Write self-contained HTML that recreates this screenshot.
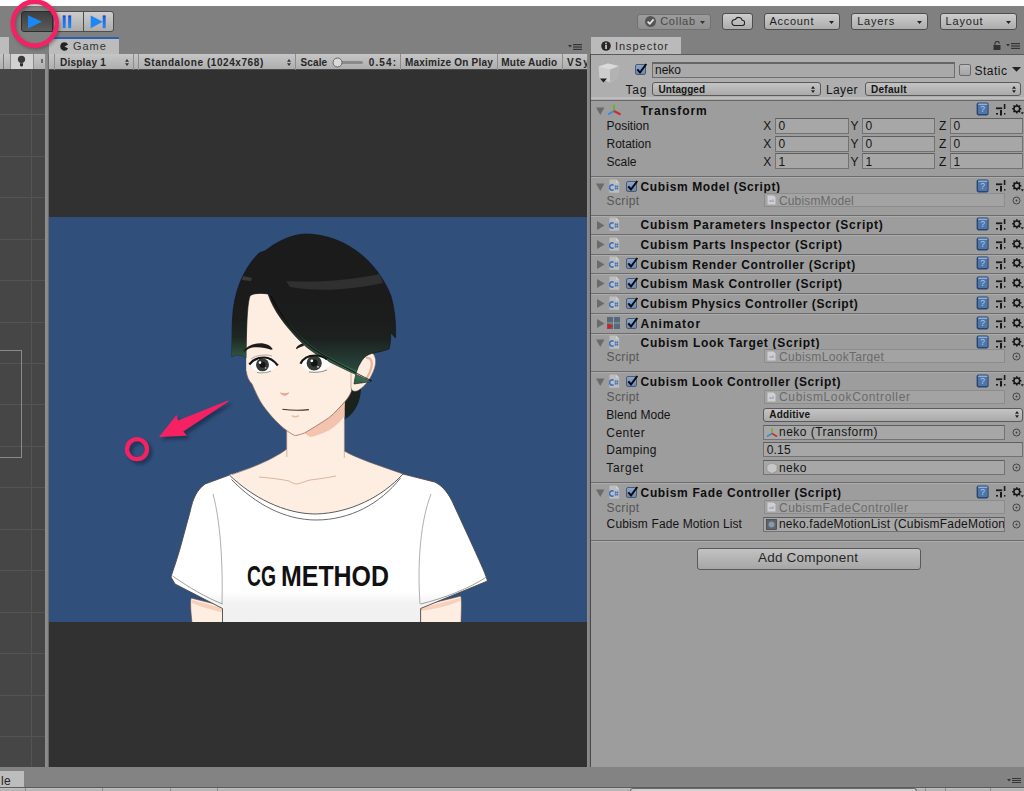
<!DOCTYPE html><html><head><meta charset="utf-8"><style>
*{margin:0;padding:0;box-sizing:border-box}
html,body{width:1024px;height:791px;overflow:hidden;background:#fff;font-family:"Liberation Sans",sans-serif}
.t{position:absolute;line-height:1;white-space:nowrap}
.abs{position:absolute}
</style></head><body><div style="position:absolute;left:0px;top:0px;width:1024px;height:6px;background:#fff"></div>
<div style="position:absolute;left:0px;top:6px;width:1024px;height:761px;background:#808080"></div>
<div style="position:absolute;left:0px;top:70px;width:45px;height:697px;background:#464646"></div>
<div style="position:absolute;left:0px;top:114px;width:45px;height:1px;background:#545454"></div>
<div style="position:absolute;left:0px;top:156px;width:45px;height:1px;background:#545454"></div>
<div style="position:absolute;left:0px;top:197px;width:45px;height:1px;background:#545454"></div>
<div style="position:absolute;left:0px;top:239px;width:45px;height:1px;background:#545454"></div>
<div style="position:absolute;left:0px;top:280px;width:45px;height:1px;background:#545454"></div>
<div style="position:absolute;left:0px;top:322px;width:45px;height:1px;background:#545454"></div>
<div style="position:absolute;left:0px;top:363px;width:45px;height:1px;background:#545454"></div>
<div style="position:absolute;left:0px;top:404px;width:45px;height:1px;background:#545454"></div>
<div style="position:absolute;left:0px;top:446px;width:45px;height:1px;background:#545454"></div>
<div style="position:absolute;left:0px;top:487px;width:45px;height:1px;background:#545454"></div>
<div style="position:absolute;left:0px;top:529px;width:45px;height:1px;background:#545454"></div>
<div style="position:absolute;left:0px;top:570px;width:45px;height:1px;background:#545454"></div>
<div style="position:absolute;left:0px;top:612px;width:45px;height:1px;background:#545454"></div>
<div style="position:absolute;left:0px;top:653px;width:45px;height:1px;background:#545454"></div>
<div style="position:absolute;left:0px;top:695px;width:45px;height:1px;background:#545454"></div>
<div style="position:absolute;left:0px;top:736px;width:45px;height:1px;background:#545454"></div>
<div style="position:absolute;left:31px;top:70px;width:1px;height:697px;background:#545454"></div>
<div style="position:absolute;left:-5px;top:350px;width:27px;height:108px;border:1px solid #8a8a8a"></div>
<div style="position:absolute;left:0px;top:37px;width:9px;height:17px;background:#bcbcbc"></div>
<div style="position:absolute;left:0px;top:53.5px;width:45px;height:16.5px;background:linear-gradient(#c6c6c6,#b0b0b0);border-bottom:1px solid #4a4a4a"></div>
<div style="position:absolute;left:10px;top:54px;width:24px;height:15px;background:#d2d2d2;border-left:1px solid #8a8a8a;border-right:1px solid #8a8a8a"></div>
<svg class="abs" style="left:16px;top:55px" width="12" height="13"><circle cx="5.5" cy="4.3" r="3.6" fill="#3a3a3a"/><path d="M4 8.3h3v1.6a1.5 1.5 0 0 1-3 0z" fill="#2a2a2a"/></svg>
<div style="position:absolute;left:3px;top:54px;width:1px;height:15px;background:#7c7c7c"></div>
<div style="position:absolute;left:41px;top:58.8px;width:1.6px;height:4.5px;background:#6a6a6a"></div>
<div style="position:absolute;left:45px;top:54px;width:4px;height:713px;background:linear-gradient(90deg,#8e8e8e,#8a8a8a 60%,#5e5e5e)"></div>
<div style="position:absolute;left:49px;top:37px;width:70px;height:2px;background:#2a62b0"></div>
<div style="position:absolute;left:49px;top:39px;width:70px;height:15px;background:#bcbcbc"></div>
<div class="t" style="left:73px;top:41.46px;font-size:11px;font-weight:normal;color:#333333;letter-spacing:0.97px;">Game</div>
<svg class="abs" style="left:59.5px;top:41.5px" width="9" height="9"><path d="M4.5 0.3a4.2 4.2 0 1 0 3.6 6.3L4.5 4.5l3.6-2.1A4.2 4.2 0 0 0 4.5 0.3z" fill="#222"/></svg>
<div style="position:absolute;left:49px;top:54px;width:539px;height:16px;background:linear-gradient(#c6c6c6,#aeaeae);border-bottom:1px solid #4a4a4a"></div>
<div style="position:absolute;left:54px;top:54px;width:1px;height:16px;background:#8c8c8c"></div>
<div style="position:absolute;left:133px;top:54px;width:1px;height:16px;background:#8c8c8c"></div>
<div style="position:absolute;left:138px;top:54px;width:1px;height:16px;background:#8c8c8c"></div>
<div style="position:absolute;left:295px;top:54px;width:1px;height:16px;background:#8c8c8c"></div>
<div style="position:absolute;left:400px;top:54px;width:1px;height:16px;background:#8c8c8c"></div>
<div style="position:absolute;left:497px;top:54px;width:1px;height:16px;background:#8c8c8c"></div>
<div style="position:absolute;left:562px;top:54px;width:1px;height:16px;background:#8c8c8c"></div>
<div class="t" style="left:60px;top:57.62px;font-size:10px;font-weight:bold;color:#262626;letter-spacing:0.235px;">Display 1</div>
<div class="t" style="left:144px;top:57.62px;font-size:10px;font-weight:bold;color:#262626;letter-spacing:0.569px;">Standalone (1024x768)</div>
<svg class="abs" style="left:125px;top:59px" width="4" height="7"><path d="M0 2.8L2 0L4 2.8zM0 4.2L2 7L4 4.2z" fill="#333"/></svg>
<svg class="abs" style="left:287px;top:59px" width="4" height="7"><path d="M0 2.8L2 0L4 2.8zM0 4.2L2 7L4 4.2z" fill="#333"/></svg>
<div class="t" style="left:300.6px;top:57.62px;font-size:10px;font-weight:bold;color:#262626;letter-spacing:0.09px;">Scale</div>
<div style="position:absolute;left:335px;top:61px;width:28px;height:3px;background:#8a8a8a;border-radius:2px"></div>
<svg class="abs" style="left:332px;top:57px" width="11" height="11"><circle cx="5.5" cy="5.5" r="4.5" fill="#d8d8d8" stroke="#666"/></svg>
<div class="t" style="left:368.7px;top:57.62px;font-size:10px;font-weight:bold;color:#262626;letter-spacing:1.126px;">0.54:</div>
<div class="t" style="left:405px;top:57.62px;font-size:10px;font-weight:bold;color:#262626;letter-spacing:0.221px;">Maximize On Play</div>
<div class="t" style="left:501.3px;top:57.62px;font-size:10px;font-weight:bold;color:#262626;letter-spacing:0.204px;">Mute Audio</div>
<div class="t" style="left:567px;top:57.62px;font-size:10px;font-weight:bold;color:#262626;letter-spacing:1.447px;">VSy</div>
<svg class="abs" style="left:568px;top:44px" width="14" height="7"><path d="M0 1h4L2 3.5z" fill="#333"/><rect x="5" y="0" width="9" height="1.2" fill="#333"/><rect x="5" y="2.4" width="9" height="1.2" fill="#333"/><rect x="5" y="4.8" width="9" height="1.2" fill="#333"/></svg>
<div style="position:absolute;left:49px;top:70px;width:538px;height:697px;background:#313131"></div>
<div style="position:absolute;left:49px;top:217px;width:538px;height:405px;background:#304f7b"></div>
<div style="position:absolute;left:587px;top:54px;width:4px;height:713px;background:linear-gradient(90deg,#8e8e8e,#7a7a7a)"></div>
<div style="position:absolute;left:590px;top:54px;width:1px;height:713px;background:#4a4a4a"></div>
<div style="position:absolute;left:53px;top:11px;width:61px;height:21px;background:linear-gradient(#cdcdcd,#acacac);border:1px solid #4e4e4e;border-radius:3px;"></div>
<div style="position:absolute;left:83px;top:12px;width:1px;height:19px;background:#4e4e4e"></div>
<div style="position:absolute;left:21px;top:11px;width:32px;height:21px;background:linear-gradient(#3e3e3e,#5c5c5c);border:1px solid #2c2c2c;border-radius:3px 0 0 3px"></div>
<svg class="abs" style="left:27px;top:15px" width="16" height="14"><path d="M1 0.3L15 6.8L1 13.5z" fill="#1b86f5"/></svg>
<svg class="abs" style="left:62px;top:15px" width="10" height="14"><defs><linearGradient id="bg1" x1="0" y1="0" x2="0" y2="1"><stop offset="0" stop-color="#0a2a90"/><stop offset="0.12" stop-color="#1a5fe0"/><stop offset="1" stop-color="#2a86f8"/></linearGradient></defs><rect x="0.7" y="0.5" width="3" height="12.7" fill="url(#bg1)"/><rect x="6.2" y="0.5" width="3" height="12.7" fill="url(#bg1)"/></svg>
<svg class="abs" style="left:90px;top:15px" width="17" height="14"><path d="M0.7 0.5L12.7 6.8L0.7 13.2z" fill="#1b86f5"/><rect x="12.7" y="0.5" width="3" height="12.7" fill="url(#bg1)"/></svg>
<div style="position:absolute;left:637px;top:13.5px;width:74px;height:16px;background:linear-gradient(#9c9c9c,#909090);border:1px solid #727272;border-radius:3px"></div>
<svg class="abs" style="left:645px;top:16px" width="12" height="12"><circle cx="5.5" cy="5.5" r="5.5" fill="#555"/><path d="M2.6 5.6L4.8 7.8L8.6 3.4" stroke="#e6e6e6" stroke-width="1.7" fill="none"/></svg>
<div class="t" style="left:660.2px;top:15.66px;font-size:11px;font-weight:normal;color:#484848;letter-spacing:0.738px;">Collab</div>
<svg class="abs" style="left:699.5px;top:21px" width="5" height="3"><path d="M0 0h5L2.5 3z" fill="#333"/></svg>
<div style="position:absolute;left:722px;top:13px;width:31px;height:17px;background:linear-gradient(#cdcdcd,#acacac);border:1px solid #4e4e4e;border-radius:3px;"></div>
<svg class="abs" style="left:731px;top:16px" width="14" height="11"><path d="M3.5 9.5h7.5a2.6 2.6 0 0 0 0.2-5.2A3.6 3.6 0 0 0 4.4 3.5 2.9 2.9 0 0 0 3.5 9.5z" stroke="#222" stroke-width="1.1" fill="none"/></svg>
<div style="position:absolute;left:764px;top:13px;width:76px;height:17px;background:linear-gradient(#cdcdcd,#acacac);border:1px solid #4e4e4e;border-radius:3px;"></div>
<div class="t" style="left:769.6px;top:15.86px;font-size:11px;font-weight:normal;color:#1e1e1e;letter-spacing:0.688px;">Account</div>
<svg class="abs" style="left:829px;top:20.5px" width="5" height="3"><path d="M0 0h5L2.5 3z" fill="#222"/></svg>
<div style="position:absolute;left:851px;top:13px;width:77px;height:17px;background:linear-gradient(#cdcdcd,#acacac);border:1px solid #4e4e4e;border-radius:3px;"></div>
<div class="t" style="left:857.2px;top:15.86px;font-size:11px;font-weight:normal;color:#1e1e1e;letter-spacing:0.79px;">Layers</div>
<svg class="abs" style="left:917px;top:20.5px" width="5" height="3"><path d="M0 0h5L2.5 3z" fill="#222"/></svg>
<div style="position:absolute;left:940px;top:13px;width:77px;height:17px;background:linear-gradient(#cdcdcd,#acacac);border:1px solid #4e4e4e;border-radius:3px;"></div>
<div class="t" style="left:945.5px;top:15.86px;font-size:11px;font-weight:normal;color:#1e1e1e;letter-spacing:0.83px;">Layout</div>
<svg class="abs" style="left:1006px;top:20.5px" width="5" height="3"><path d="M0 0h5L2.5 3z" fill="#222"/></svg>
<div style="position:absolute;left:0px;top:767px;width:1024px;height:21px;background:#838383"></div>
<div style="position:absolute;left:0px;top:771px;width:24px;height:17px;background:#bdbdbd"></div>
<div class="t" style="left:1px;top:774.60px;font-size:12px;font-weight:normal;color:#222;letter-spacing:0.4px;">le</div>
<div style="position:absolute;left:0px;top:787px;width:1024px;height:4px;background:linear-gradient(#c0c0c0,#b0b0b0);border-top:1px solid #5c5c5c"></div>
<div style="position:absolute;left:25px;top:788px;width:1px;height:3px;background:#8a8a8a"></div>
<div style="position:absolute;left:102px;top:788px;width:1px;height:3px;background:#8a8a8a"></div>
<div style="position:absolute;left:170px;top:788px;width:1px;height:3px;background:#8a8a8a"></div>
<div style="position:absolute;left:217px;top:788px;width:1px;height:3px;background:#8a8a8a"></div>
<div style="position:absolute;left:925px;top:788px;width:1px;height:3px;background:#8a8a8a"></div>
<div style="position:absolute;left:945px;top:788px;width:1px;height:3px;background:#8a8a8a"></div>
<div style="position:absolute;left:990px;top:788px;width:1px;height:3px;background:#8a8a8a"></div>
<div style="position:absolute;left:630px;top:788px;width:287px;height:3px;background:#d0d0d0;border:1px solid #6a6a6a;border-bottom:none;border-radius:3px 3px 0 0"></div>
<svg class="abs" style="left:1007px;top:778px" width="14" height="6"><path d="M0 1h4L2 3.5z" fill="#333"/><rect x="5" y="0" width="9" height="1" fill="#333"/><rect x="5" y="2" width="9" height="1" fill="#333"/><rect x="5" y="4" width="9" height="1" fill="#333"/></svg>
<div style="position:absolute;left:591px;top:37px;width:90px;height:17px;background:#bababa"></div>
<svg class="abs" style="left:601px;top:41px" width="10" height="10"><circle cx="5" cy="5" r="4.8" fill="#262626"/><rect x="4.1" y="4" width="1.9" height="4" fill="#bbb"/><circle cx="5" cy="2.6" r="1" fill="#bbb"/></svg>
<div class="t" style="left:615px;top:41.06px;font-size:11px;font-weight:normal;color:#2a2a2a;letter-spacing:0.954px;">Inspector</div>
<svg class="abs" style="left:993px;top:41px" width="8" height="9"><path d="M2 4V2.6a2.2 2.2 0 0 1 4.4 0" stroke="#333" stroke-width="1.1" fill="none"/><rect x="0.5" y="4" width="7" height="5" fill="#333"/></svg>
<svg class="abs" style="left:1006px;top:43px" width="14" height="7"><path d="M0 1h4L2 3.5z" fill="#333"/><rect x="5" y="0" width="9" height="1.2" fill="#333"/><rect x="5" y="2.4" width="9" height="1.2" fill="#333"/><rect x="5" y="4.8" width="9" height="1.2" fill="#333"/></svg>
<div style="position:absolute;left:591px;top:54px;width:433px;height:713px;background:#9d9d9d"></div>
<div style="position:absolute;left:591px;top:54px;width:433px;height:1px;background:#5a5a5a"></div>
<div style="position:absolute;left:591px;top:55px;width:433px;height:45px;background:#aeaeae"></div>
<div style="position:absolute;left:591px;top:97px;width:433px;height:2px;background:#bcbcbc"></div>
<div style="position:absolute;left:591px;top:99.5px;width:433px;height:1.2px;background:#666"></div>
<svg class="abs" style="left:597px;top:62px" width="24" height="22"><path d="M1.5 4.5L11 1.5L21.5 4L21 15.5L13 20.5L2.5 16.5z" fill="#cdcdcd"/><path d="M13 7.5L21.5 4L21 15.5L13 20.5z" fill="#b2b2b2"/><path d="M1.5 4.5L11 1.5L21.5 4L13 7.5z" fill="#dadada"/><path d="M3 16.5h7l-3.5 4z" fill="#1e1e1e"/></svg>
<div style="position:absolute;left:635px;top:64px;width:11px;height:11px;background:linear-gradient(#8aa6cc,#6a88b4);border:1px solid #4c5a70;border-radius:2px"></div>
<svg class="abs" style="left:635px;top:62px" width="13" height="13"><path d="M2.3 7.3L5 10.5L11.3 2" stroke="#0a0a0a" stroke-width="2" fill="none"/></svg>
<div style="position:absolute;left:652px;top:62px;width:303px;height:16px;background:#a9a9a9;border:1px solid #6e6e6e;border-top:2px solid #666"></div>
<div class="t" style="left:655px;top:63.90px;font-size:12px;font-weight:normal;color:#141414;letter-spacing:0px;">neko</div>
<div style="position:absolute;left:959px;top:64px;width:12px;height:12px;background:linear-gradient(#bcbcbc,#a4a4a4);border:1px solid #6a6a6a;border-radius:2px"></div>
<div class="t" style="left:974.5px;top:64.60px;font-size:12px;font-weight:normal;color:#141414;letter-spacing:0.489px;">Static</div>
<svg class="abs" style="left:1012px;top:67px" width="9" height="5"><path d="M0 0h9L4.5 4.8z" fill="#222"/></svg>
<div class="t" style="left:625.4px;top:84.30px;font-size:12px;font-weight:normal;color:#141414;letter-spacing:0.8px;">Tag</div>
<div style="position:absolute;left:652px;top:82px;width:169px;height:14px;background:linear-gradient(#c4c4c4,#aaaaaa);border:1px solid #5a5a5a;border-radius:3px"></div>
<div class="t" style="left:658.6px;top:84.62px;font-size:10px;font-weight:bold;color:#141414;letter-spacing:0.056px;">Untagged</div>
<div class="t" style="left:826px;top:84.30px;font-size:12px;font-weight:normal;color:#141414;letter-spacing:0.382px;">Layer</div>
<div style="position:absolute;left:865px;top:82px;width:156px;height:14px;background:linear-gradient(#c4c4c4,#aaaaaa);border:1px solid #5a5a5a;border-radius:3px"></div>
<div class="t" style="left:871px;top:84.62px;font-size:10px;font-weight:bold;color:#141414;letter-spacing:0.282px;">Default</div>
<svg class="abs" style="left:811px;top:86px" width="4" height="7"><path d="M0 2.8L2 0L4 2.8zM0 4.2L2 7L4 4.2z" fill="#222"/></svg>
<svg class="abs" style="left:1012px;top:86px" width="4" height="7"><path d="M0 2.8L2 0L4 2.8zM0 4.2L2 7L4 4.2z" fill="#222"/></svg>
<svg class="abs" style="left:596px;top:106.5px" width="9" height="8"><path d="M0 0.5h8.5L4.25 8z" fill="#6a6a6a"/></svg>
<svg class="abs" style="left:607px;top:104px" width="15" height="12"><path d="M7 7V0.5" stroke="#6ab42a" stroke-width="2"/><path d="M7 7L1 10.5" stroke="#3a8ad8" stroke-width="2"/><path d="M7 7L13.5 10.5" stroke="#d02a2a" stroke-width="2"/></svg>
<div class="t" style="left:640.8px;top:104.80px;font-size:12px;font-weight:bold;color:#0e0e0e;letter-spacing:0.909px;">Transform</div>
<svg class="abs" style="left:976px;top:102px" width="14" height="14"><rect x="0.6" y="0.6" width="12" height="12.8" rx="1.8" fill="#2a4670"/><rect x="2" y="1.6" width="9.6" height="10.4" rx="1" fill="#4f76a8"/><rect x="2.2" y="1.6" width="9.2" height="1.4" fill="#8fb0d8"/><text x="6.6" y="10" font-size="8.5" font-family="Liberation Sans" fill="#b8cbe2" text-anchor="middle">?</text></svg>
<svg class="abs" style="left:996px;top:103.5px" width="10" height="12"><rect x="0" y="3.4" width="6.2" height="1.8" fill="#1a1a1a"/><rect x="7.8" y="0" width="1.6" height="5" fill="#1a1a1a"/><rect x="0" y="9" width="2" height="1.6" fill="#1a1a1a"/><rect x="4" y="6" width="2" height="5.5" fill="#1a1a1a"/><rect x="8" y="9" width="1.4" height="1.6" fill="#1a1a1a"/></svg>
<svg class="abs" style="left:1012px;top:104px" width="12" height="12"><circle cx="4.8" cy="4.8" r="2.9" fill="none" stroke="#151515" stroke-width="1.5"/><g stroke="#151515" stroke-width="1.5"><path d="M4.8 0.2v1.8M4.8 7.6v1.8M0.2 4.8h1.8M7.6 4.8h1.8M1.5 1.5l1.3 1.3M6.8 6.8l1.3 1.3M1.5 8.1l1.3-1.3M6.8 2.8l1.3-1.3"/></g><path d="M8.6 8.3h3.4l-1.7 2.2z" fill="#222"/></svg>
<div class="t" style="left:606.5px;top:120.10px;font-size:12px;font-weight:normal;color:#141414;letter-spacing:0px;">Position</div>
<div class="t" style="left:763.2px;top:120.10px;font-size:12px;font-weight:normal;color:#141414;letter-spacing:0px;">X</div>
<div style="position:absolute;left:775px;top:117.8px;width:74px;height:16px;background:#a7a7a7;border:1px solid #727272;border-top-color:#5e5e5e"></div>
<div class="t" style="left:778.5px;top:120.10px;font-size:12px;font-weight:normal;color:#141414;letter-spacing:0px;">0</div>
<div class="t" style="left:850.5px;top:120.10px;font-size:12px;font-weight:normal;color:#141414;letter-spacing:0px;">Y</div>
<div style="position:absolute;left:862px;top:117.8px;width:73px;height:16px;background:#a7a7a7;border:1px solid #727272;border-top-color:#5e5e5e"></div>
<div class="t" style="left:865.5px;top:120.10px;font-size:12px;font-weight:normal;color:#141414;letter-spacing:0px;">0</div>
<div class="t" style="left:939px;top:120.10px;font-size:12px;font-weight:normal;color:#141414;letter-spacing:0px;">Z</div>
<div style="position:absolute;left:950px;top:117.8px;width:73px;height:16px;background:#a7a7a7;border:1px solid #727272;border-top-color:#5e5e5e"></div>
<div class="t" style="left:953.5px;top:120.10px;font-size:12px;font-weight:normal;color:#141414;letter-spacing:0px;">0</div>
<div class="t" style="left:606.5px;top:137.90px;font-size:12px;font-weight:normal;color:#141414;letter-spacing:0px;">Rotation</div>
<div class="t" style="left:763.2px;top:137.90px;font-size:12px;font-weight:normal;color:#141414;letter-spacing:0px;">X</div>
<div style="position:absolute;left:775px;top:135.6px;width:74px;height:16px;background:#a7a7a7;border:1px solid #727272;border-top-color:#5e5e5e"></div>
<div class="t" style="left:778.5px;top:137.90px;font-size:12px;font-weight:normal;color:#141414;letter-spacing:0px;">0</div>
<div class="t" style="left:850.5px;top:137.90px;font-size:12px;font-weight:normal;color:#141414;letter-spacing:0px;">Y</div>
<div style="position:absolute;left:862px;top:135.6px;width:73px;height:16px;background:#a7a7a7;border:1px solid #727272;border-top-color:#5e5e5e"></div>
<div class="t" style="left:865.5px;top:137.90px;font-size:12px;font-weight:normal;color:#141414;letter-spacing:0px;">0</div>
<div class="t" style="left:939px;top:137.90px;font-size:12px;font-weight:normal;color:#141414;letter-spacing:0px;">Z</div>
<div style="position:absolute;left:950px;top:135.6px;width:73px;height:16px;background:#a7a7a7;border:1px solid #727272;border-top-color:#5e5e5e"></div>
<div class="t" style="left:953.5px;top:137.90px;font-size:12px;font-weight:normal;color:#141414;letter-spacing:0px;">0</div>
<div class="t" style="left:606.5px;top:155.60px;font-size:12px;font-weight:normal;color:#141414;letter-spacing:0px;">Scale</div>
<div class="t" style="left:763.2px;top:155.60px;font-size:12px;font-weight:normal;color:#141414;letter-spacing:0px;">X</div>
<div style="position:absolute;left:775px;top:153.3px;width:74px;height:16px;background:#a7a7a7;border:1px solid #727272;border-top-color:#5e5e5e"></div>
<div class="t" style="left:778.5px;top:155.60px;font-size:12px;font-weight:normal;color:#141414;letter-spacing:0px;">1</div>
<div class="t" style="left:850.5px;top:155.60px;font-size:12px;font-weight:normal;color:#141414;letter-spacing:0px;">Y</div>
<div style="position:absolute;left:862px;top:153.3px;width:73px;height:16px;background:#a7a7a7;border:1px solid #727272;border-top-color:#5e5e5e"></div>
<div class="t" style="left:865.5px;top:155.60px;font-size:12px;font-weight:normal;color:#141414;letter-spacing:0px;">1</div>
<div class="t" style="left:939px;top:155.60px;font-size:12px;font-weight:normal;color:#141414;letter-spacing:0px;">Z</div>
<div style="position:absolute;left:950px;top:153.3px;width:73px;height:16px;background:#a7a7a7;border:1px solid #727272;border-top-color:#5e5e5e"></div>
<div class="t" style="left:953.5px;top:155.60px;font-size:12px;font-weight:normal;color:#141414;letter-spacing:0px;">1</div>
<div style="position:absolute;left:591px;top:176px;width:433px;height:1px;background:#6c6c6c"></div>
<div style="position:absolute;left:591px;top:177px;width:433px;height:1px;background:#acacac"></div>
<svg class="abs" style="left:596px;top:182.5px" width="9" height="8"><path d="M0 0.5h8.5L4.25 8z" fill="#6a6a6a"/></svg>
<svg class="abs" style="left:609px;top:178.5px" width="11" height="14"><path d="M0.5 0.5h6.5l3.2 3.2v10h-9.7z" fill="#bdbdbd"/><path d="M7 0.5v3.2h3.2z" fill="#d0d0d0"/><path d="M4.6 6.3a2.6 2.6 0 1 0 0 4.4" stroke="#3b6cc0" stroke-width="1.5" fill="none"/><path d="M5.6 7.4h3.8M5.6 9.6h3.8M6.6 6.2v4.6M8.4 6.2v4.6" stroke="#4a78c4" stroke-width="0.9"/></svg>
<div style="position:absolute;left:626px;top:180.5px;width:11px;height:11px;background:linear-gradient(#8aa6cc,#6a88b4);border:1px solid #4c5a70;border-radius:2px"></div>
<svg class="abs" style="left:626px;top:178.5px" width="13" height="13"><path d="M2.3 7.3L5 10.5L11.3 2" stroke="#0a0a0a" stroke-width="2" fill="none"/></svg>
<div class="t" style="left:640.6px;top:180.70px;font-size:12px;font-weight:bold;color:#0e0e0e;letter-spacing:0.606px;">Cubism Model (Script)</div>
<svg class="abs" style="left:976px;top:178.5px" width="14" height="14"><rect x="0.6" y="0.6" width="12" height="12.8" rx="1.8" fill="#2a4670"/><rect x="2" y="1.6" width="9.6" height="10.4" rx="1" fill="#4f76a8"/><rect x="2.2" y="1.6" width="9.2" height="1.4" fill="#8fb0d8"/><text x="6.6" y="10" font-size="8.5" font-family="Liberation Sans" fill="#b8cbe2" text-anchor="middle">?</text></svg>
<svg class="abs" style="left:996px;top:180.0px" width="10" height="12"><rect x="0" y="3.4" width="6.2" height="1.8" fill="#1a1a1a"/><rect x="7.8" y="0" width="1.6" height="5" fill="#1a1a1a"/><rect x="0" y="9" width="2" height="1.6" fill="#1a1a1a"/><rect x="4" y="6" width="2" height="5.5" fill="#1a1a1a"/><rect x="8" y="9" width="1.4" height="1.6" fill="#1a1a1a"/></svg>
<svg class="abs" style="left:1012px;top:180.5px" width="12" height="12"><circle cx="4.8" cy="4.8" r="2.9" fill="none" stroke="#151515" stroke-width="1.5"/><g stroke="#151515" stroke-width="1.5"><path d="M4.8 0.2v1.8M4.8 7.6v1.8M0.2 4.8h1.8M7.6 4.8h1.8M1.5 1.5l1.3 1.3M6.8 6.8l1.3 1.3M1.5 8.1l1.3-1.3M6.8 2.8l1.3-1.3"/></g><path d="M8.6 8.3h3.4l-1.7 2.2z" fill="#222"/></svg>
<div class="t" style="left:606.5px;top:194.70px;font-size:12px;font-weight:normal;color:#565656;letter-spacing:0.375px;">Script</div>
<div style="position:absolute;left:764px;top:193px;width:241px;height:14px;background:#a3a3a3;border:1px solid #8c8c8c"></div>
<svg class="abs" style="left:767px;top:195px" width="9" height="10"><path d="M0.5 0.5h6l2 2v7h-8z" fill="#cfcfcf"/><text x="4.5" y="7" font-size="4" font-family="Liberation Sans" font-weight="bold" fill="#6f8fc0" text-anchor="middle">c#</text></svg>
<div class="abs" style="left:779px;top:193px;width:225px;height:14px;overflow:hidden">
<div class="t" style="left:0px;top:1.50px;font-size:12px;font-weight:normal;color:#6a6a6a;letter-spacing:0.14px;">CubismModel</div>
</div>
<svg class="abs" style="left:1012px;top:195.5px" width="9" height="9"><circle cx="4.5" cy="4.5" r="3.5" fill="none" stroke="#3a3a3a" stroke-width="0.9"/><circle cx="4.5" cy="4.5" r="0.9" fill="#3a3a3a"/></svg>
<div style="position:absolute;left:591px;top:214.5px;width:433px;height:1px;background:#6c6c6c"></div>
<div style="position:absolute;left:591px;top:215.5px;width:433px;height:1px;background:#acacac"></div>
<svg class="abs" style="left:597px;top:220.5px" width="8" height="9"><path d="M0 0L7.5 4.5L0 9z" fill="#6a6a6a"/></svg>
<svg class="abs" style="left:609px;top:217.0px" width="11" height="14"><path d="M0.5 0.5h6.5l3.2 3.2v10h-9.7z" fill="#bdbdbd"/><path d="M7 0.5v3.2h3.2z" fill="#d0d0d0"/><path d="M4.6 6.3a2.6 2.6 0 1 0 0 4.4" stroke="#3b6cc0" stroke-width="1.5" fill="none"/><path d="M5.6 7.4h3.8M5.6 9.6h3.8M6.6 6.2v4.6M8.4 6.2v4.6" stroke="#4a78c4" stroke-width="0.9"/></svg>
<div class="t" style="left:640.6px;top:219.20px;font-size:12px;font-weight:bold;color:#0e0e0e;letter-spacing:0.767px;">Cubism Parameters Inspector (Script)</div>
<svg class="abs" style="left:976px;top:217.0px" width="14" height="14"><rect x="0.6" y="0.6" width="12" height="12.8" rx="1.8" fill="#2a4670"/><rect x="2" y="1.6" width="9.6" height="10.4" rx="1" fill="#4f76a8"/><rect x="2.2" y="1.6" width="9.2" height="1.4" fill="#8fb0d8"/><text x="6.6" y="10" font-size="8.5" font-family="Liberation Sans" fill="#b8cbe2" text-anchor="middle">?</text></svg>
<svg class="abs" style="left:996px;top:218.5px" width="10" height="12"><rect x="0" y="3.4" width="6.2" height="1.8" fill="#1a1a1a"/><rect x="7.8" y="0" width="1.6" height="5" fill="#1a1a1a"/><rect x="0" y="9" width="2" height="1.6" fill="#1a1a1a"/><rect x="4" y="6" width="2" height="5.5" fill="#1a1a1a"/><rect x="8" y="9" width="1.4" height="1.6" fill="#1a1a1a"/></svg>
<svg class="abs" style="left:1012px;top:219.0px" width="12" height="12"><circle cx="4.8" cy="4.8" r="2.9" fill="none" stroke="#151515" stroke-width="1.5"/><g stroke="#151515" stroke-width="1.5"><path d="M4.8 0.2v1.8M4.8 7.6v1.8M0.2 4.8h1.8M7.6 4.8h1.8M1.5 1.5l1.3 1.3M6.8 6.8l1.3 1.3M1.5 8.1l1.3-1.3M6.8 2.8l1.3-1.3"/></g><path d="M8.6 8.3h3.4l-1.7 2.2z" fill="#222"/></svg>
<div style="position:absolute;left:591px;top:234.2px;width:433px;height:1px;background:#6c6c6c"></div>
<div style="position:absolute;left:591px;top:235.2px;width:433px;height:1px;background:#acacac"></div>
<svg class="abs" style="left:597px;top:240.2px" width="8" height="9"><path d="M0 0L7.5 4.5L0 9z" fill="#6a6a6a"/></svg>
<svg class="abs" style="left:609px;top:236.7px" width="11" height="14"><path d="M0.5 0.5h6.5l3.2 3.2v10h-9.7z" fill="#bdbdbd"/><path d="M7 0.5v3.2h3.2z" fill="#d0d0d0"/><path d="M4.6 6.3a2.6 2.6 0 1 0 0 4.4" stroke="#3b6cc0" stroke-width="1.5" fill="none"/><path d="M5.6 7.4h3.8M5.6 9.6h3.8M6.6 6.2v4.6M8.4 6.2v4.6" stroke="#4a78c4" stroke-width="0.9"/></svg>
<div class="t" style="left:640.6px;top:238.90px;font-size:12px;font-weight:bold;color:#0e0e0e;letter-spacing:0.71px;">Cubism Parts Inspector (Script)</div>
<svg class="abs" style="left:976px;top:236.7px" width="14" height="14"><rect x="0.6" y="0.6" width="12" height="12.8" rx="1.8" fill="#2a4670"/><rect x="2" y="1.6" width="9.6" height="10.4" rx="1" fill="#4f76a8"/><rect x="2.2" y="1.6" width="9.2" height="1.4" fill="#8fb0d8"/><text x="6.6" y="10" font-size="8.5" font-family="Liberation Sans" fill="#b8cbe2" text-anchor="middle">?</text></svg>
<svg class="abs" style="left:996px;top:238.2px" width="10" height="12"><rect x="0" y="3.4" width="6.2" height="1.8" fill="#1a1a1a"/><rect x="7.8" y="0" width="1.6" height="5" fill="#1a1a1a"/><rect x="0" y="9" width="2" height="1.6" fill="#1a1a1a"/><rect x="4" y="6" width="2" height="5.5" fill="#1a1a1a"/><rect x="8" y="9" width="1.4" height="1.6" fill="#1a1a1a"/></svg>
<svg class="abs" style="left:1012px;top:238.7px" width="12" height="12"><circle cx="4.8" cy="4.8" r="2.9" fill="none" stroke="#151515" stroke-width="1.5"/><g stroke="#151515" stroke-width="1.5"><path d="M4.8 0.2v1.8M4.8 7.6v1.8M0.2 4.8h1.8M7.6 4.8h1.8M1.5 1.5l1.3 1.3M6.8 6.8l1.3 1.3M1.5 8.1l1.3-1.3M6.8 2.8l1.3-1.3"/></g><path d="M8.6 8.3h3.4l-1.7 2.2z" fill="#222"/></svg>
<div style="position:absolute;left:591px;top:253.9px;width:433px;height:1px;background:#6c6c6c"></div>
<div style="position:absolute;left:591px;top:254.9px;width:433px;height:1px;background:#acacac"></div>
<svg class="abs" style="left:597px;top:259.9px" width="8" height="9"><path d="M0 0L7.5 4.5L0 9z" fill="#6a6a6a"/></svg>
<svg class="abs" style="left:609px;top:256.4px" width="11" height="14"><path d="M0.5 0.5h6.5l3.2 3.2v10h-9.7z" fill="#bdbdbd"/><path d="M7 0.5v3.2h3.2z" fill="#d0d0d0"/><path d="M4.6 6.3a2.6 2.6 0 1 0 0 4.4" stroke="#3b6cc0" stroke-width="1.5" fill="none"/><path d="M5.6 7.4h3.8M5.6 9.6h3.8M6.6 6.2v4.6M8.4 6.2v4.6" stroke="#4a78c4" stroke-width="0.9"/></svg>
<div style="position:absolute;left:626px;top:258.4px;width:11px;height:11px;background:linear-gradient(#8aa6cc,#6a88b4);border:1px solid #4c5a70;border-radius:2px"></div>
<svg class="abs" style="left:626px;top:256.4px" width="13" height="13"><path d="M2.3 7.3L5 10.5L11.3 2" stroke="#0a0a0a" stroke-width="2" fill="none"/></svg>
<div class="t" style="left:640.6px;top:258.60px;font-size:12px;font-weight:bold;color:#0e0e0e;letter-spacing:0.621px;">Cubism Render Controller (Script)</div>
<svg class="abs" style="left:976px;top:256.4px" width="14" height="14"><rect x="0.6" y="0.6" width="12" height="12.8" rx="1.8" fill="#2a4670"/><rect x="2" y="1.6" width="9.6" height="10.4" rx="1" fill="#4f76a8"/><rect x="2.2" y="1.6" width="9.2" height="1.4" fill="#8fb0d8"/><text x="6.6" y="10" font-size="8.5" font-family="Liberation Sans" fill="#b8cbe2" text-anchor="middle">?</text></svg>
<svg class="abs" style="left:996px;top:257.9px" width="10" height="12"><rect x="0" y="3.4" width="6.2" height="1.8" fill="#1a1a1a"/><rect x="7.8" y="0" width="1.6" height="5" fill="#1a1a1a"/><rect x="0" y="9" width="2" height="1.6" fill="#1a1a1a"/><rect x="4" y="6" width="2" height="5.5" fill="#1a1a1a"/><rect x="8" y="9" width="1.4" height="1.6" fill="#1a1a1a"/></svg>
<svg class="abs" style="left:1012px;top:258.4px" width="12" height="12"><circle cx="4.8" cy="4.8" r="2.9" fill="none" stroke="#151515" stroke-width="1.5"/><g stroke="#151515" stroke-width="1.5"><path d="M4.8 0.2v1.8M4.8 7.6v1.8M0.2 4.8h1.8M7.6 4.8h1.8M1.5 1.5l1.3 1.3M6.8 6.8l1.3 1.3M1.5 8.1l1.3-1.3M6.8 2.8l1.3-1.3"/></g><path d="M8.6 8.3h3.4l-1.7 2.2z" fill="#222"/></svg>
<div style="position:absolute;left:591px;top:273.1px;width:433px;height:1px;background:#6c6c6c"></div>
<div style="position:absolute;left:591px;top:274.1px;width:433px;height:1px;background:#acacac"></div>
<svg class="abs" style="left:597px;top:279.1px" width="8" height="9"><path d="M0 0L7.5 4.5L0 9z" fill="#6a6a6a"/></svg>
<svg class="abs" style="left:609px;top:275.6px" width="11" height="14"><path d="M0.5 0.5h6.5l3.2 3.2v10h-9.7z" fill="#bdbdbd"/><path d="M7 0.5v3.2h3.2z" fill="#d0d0d0"/><path d="M4.6 6.3a2.6 2.6 0 1 0 0 4.4" stroke="#3b6cc0" stroke-width="1.5" fill="none"/><path d="M5.6 7.4h3.8M5.6 9.6h3.8M6.6 6.2v4.6M8.4 6.2v4.6" stroke="#4a78c4" stroke-width="0.9"/></svg>
<div style="position:absolute;left:626px;top:277.6px;width:11px;height:11px;background:linear-gradient(#8aa6cc,#6a88b4);border:1px solid #4c5a70;border-radius:2px"></div>
<svg class="abs" style="left:626px;top:275.6px" width="13" height="13"><path d="M2.3 7.3L5 10.5L11.3 2" stroke="#0a0a0a" stroke-width="2" fill="none"/></svg>
<div class="t" style="left:640.6px;top:277.80px;font-size:12px;font-weight:bold;color:#0e0e0e;letter-spacing:0.603px;">Cubism Mask Controller (Script)</div>
<svg class="abs" style="left:976px;top:275.6px" width="14" height="14"><rect x="0.6" y="0.6" width="12" height="12.8" rx="1.8" fill="#2a4670"/><rect x="2" y="1.6" width="9.6" height="10.4" rx="1" fill="#4f76a8"/><rect x="2.2" y="1.6" width="9.2" height="1.4" fill="#8fb0d8"/><text x="6.6" y="10" font-size="8.5" font-family="Liberation Sans" fill="#b8cbe2" text-anchor="middle">?</text></svg>
<svg class="abs" style="left:996px;top:277.1px" width="10" height="12"><rect x="0" y="3.4" width="6.2" height="1.8" fill="#1a1a1a"/><rect x="7.8" y="0" width="1.6" height="5" fill="#1a1a1a"/><rect x="0" y="9" width="2" height="1.6" fill="#1a1a1a"/><rect x="4" y="6" width="2" height="5.5" fill="#1a1a1a"/><rect x="8" y="9" width="1.4" height="1.6" fill="#1a1a1a"/></svg>
<svg class="abs" style="left:1012px;top:277.6px" width="12" height="12"><circle cx="4.8" cy="4.8" r="2.9" fill="none" stroke="#151515" stroke-width="1.5"/><g stroke="#151515" stroke-width="1.5"><path d="M4.8 0.2v1.8M4.8 7.6v1.8M0.2 4.8h1.8M7.6 4.8h1.8M1.5 1.5l1.3 1.3M6.8 6.8l1.3 1.3M1.5 8.1l1.3-1.3M6.8 2.8l1.3-1.3"/></g><path d="M8.6 8.3h3.4l-1.7 2.2z" fill="#222"/></svg>
<div style="position:absolute;left:591px;top:293px;width:433px;height:1px;background:#6c6c6c"></div>
<div style="position:absolute;left:591px;top:294px;width:433px;height:1px;background:#acacac"></div>
<svg class="abs" style="left:597px;top:299.0px" width="8" height="9"><path d="M0 0L7.5 4.5L0 9z" fill="#6a6a6a"/></svg>
<svg class="abs" style="left:609px;top:295.5px" width="11" height="14"><path d="M0.5 0.5h6.5l3.2 3.2v10h-9.7z" fill="#bdbdbd"/><path d="M7 0.5v3.2h3.2z" fill="#d0d0d0"/><path d="M4.6 6.3a2.6 2.6 0 1 0 0 4.4" stroke="#3b6cc0" stroke-width="1.5" fill="none"/><path d="M5.6 7.4h3.8M5.6 9.6h3.8M6.6 6.2v4.6M8.4 6.2v4.6" stroke="#4a78c4" stroke-width="0.9"/></svg>
<div style="position:absolute;left:626px;top:297.5px;width:11px;height:11px;background:linear-gradient(#8aa6cc,#6a88b4);border:1px solid #4c5a70;border-radius:2px"></div>
<svg class="abs" style="left:626px;top:295.5px" width="13" height="13"><path d="M2.3 7.3L5 10.5L11.3 2" stroke="#0a0a0a" stroke-width="2" fill="none"/></svg>
<div class="t" style="left:640.6px;top:297.70px;font-size:12px;font-weight:bold;color:#0e0e0e;letter-spacing:0.559px;">Cubism Physics Controller (Script)</div>
<svg class="abs" style="left:976px;top:295.5px" width="14" height="14"><rect x="0.6" y="0.6" width="12" height="12.8" rx="1.8" fill="#2a4670"/><rect x="2" y="1.6" width="9.6" height="10.4" rx="1" fill="#4f76a8"/><rect x="2.2" y="1.6" width="9.2" height="1.4" fill="#8fb0d8"/><text x="6.6" y="10" font-size="8.5" font-family="Liberation Sans" fill="#b8cbe2" text-anchor="middle">?</text></svg>
<svg class="abs" style="left:996px;top:297.0px" width="10" height="12"><rect x="0" y="3.4" width="6.2" height="1.8" fill="#1a1a1a"/><rect x="7.8" y="0" width="1.6" height="5" fill="#1a1a1a"/><rect x="0" y="9" width="2" height="1.6" fill="#1a1a1a"/><rect x="4" y="6" width="2" height="5.5" fill="#1a1a1a"/><rect x="8" y="9" width="1.4" height="1.6" fill="#1a1a1a"/></svg>
<svg class="abs" style="left:1012px;top:297.5px" width="12" height="12"><circle cx="4.8" cy="4.8" r="2.9" fill="none" stroke="#151515" stroke-width="1.5"/><g stroke="#151515" stroke-width="1.5"><path d="M4.8 0.2v1.8M4.8 7.6v1.8M0.2 4.8h1.8M7.6 4.8h1.8M1.5 1.5l1.3 1.3M6.8 6.8l1.3 1.3M1.5 8.1l1.3-1.3M6.8 2.8l1.3-1.3"/></g><path d="M8.6 8.3h3.4l-1.7 2.2z" fill="#222"/></svg>
<div style="position:absolute;left:591px;top:313px;width:433px;height:1px;background:#6c6c6c"></div>
<div style="position:absolute;left:591px;top:314px;width:433px;height:1px;background:#acacac"></div>
<svg class="abs" style="left:597px;top:319.0px" width="8" height="9"><path d="M0 0L7.5 4.5L0 9z" fill="#6a6a6a"/></svg>
<svg class="abs" style="left:607px;top:317px" width="14" height="13"><rect x="0" y="0" width="6" height="5.5" fill="#556a7a"/><rect x="7" y="0" width="6" height="5.5" fill="#556a7a"/><rect x="7" y="6.5" width="6" height="5.5" fill="#556a7a"/><rect x="0" y="6.5" width="6" height="5.5" fill="#556a7a"/><path d="M0.5 6.5L6 9.3L0.5 12.3z" fill="#e01818"/></svg>
<div style="position:absolute;left:626px;top:317.5px;width:11px;height:11px;background:linear-gradient(#8aa6cc,#6a88b4);border:1px solid #4c5a70;border-radius:2px"></div>
<svg class="abs" style="left:626px;top:315.5px" width="13" height="13"><path d="M2.3 7.3L5 10.5L11.3 2" stroke="#0a0a0a" stroke-width="2" fill="none"/></svg>
<div class="t" style="left:640.6px;top:317.70px;font-size:12px;font-weight:bold;color:#0e0e0e;letter-spacing:0.97px;">Animator</div>
<svg class="abs" style="left:976px;top:315.5px" width="14" height="14"><rect x="0.6" y="0.6" width="12" height="12.8" rx="1.8" fill="#2a4670"/><rect x="2" y="1.6" width="9.6" height="10.4" rx="1" fill="#4f76a8"/><rect x="2.2" y="1.6" width="9.2" height="1.4" fill="#8fb0d8"/><text x="6.6" y="10" font-size="8.5" font-family="Liberation Sans" fill="#b8cbe2" text-anchor="middle">?</text></svg>
<svg class="abs" style="left:996px;top:317.0px" width="10" height="12"><rect x="0" y="3.4" width="6.2" height="1.8" fill="#1a1a1a"/><rect x="7.8" y="0" width="1.6" height="5" fill="#1a1a1a"/><rect x="0" y="9" width="2" height="1.6" fill="#1a1a1a"/><rect x="4" y="6" width="2" height="5.5" fill="#1a1a1a"/><rect x="8" y="9" width="1.4" height="1.6" fill="#1a1a1a"/></svg>
<svg class="abs" style="left:1012px;top:317.5px" width="12" height="12"><circle cx="4.8" cy="4.8" r="2.9" fill="none" stroke="#151515" stroke-width="1.5"/><g stroke="#151515" stroke-width="1.5"><path d="M4.8 0.2v1.8M4.8 7.6v1.8M0.2 4.8h1.8M7.6 4.8h1.8M1.5 1.5l1.3 1.3M6.8 6.8l1.3 1.3M1.5 8.1l1.3-1.3M6.8 2.8l1.3-1.3"/></g><path d="M8.6 8.3h3.4l-1.7 2.2z" fill="#222"/></svg>
<div style="position:absolute;left:591px;top:332.5px;width:433px;height:1px;background:#6c6c6c"></div>
<div style="position:absolute;left:591px;top:333.5px;width:433px;height:1px;background:#acacac"></div>
<svg class="abs" style="left:596px;top:339.0px" width="9" height="8"><path d="M0 0.5h8.5L4.25 8z" fill="#6a6a6a"/></svg>
<svg class="abs" style="left:609px;top:335.0px" width="11" height="14"><path d="M0.5 0.5h6.5l3.2 3.2v10h-9.7z" fill="#bdbdbd"/><path d="M7 0.5v3.2h3.2z" fill="#d0d0d0"/><path d="M4.6 6.3a2.6 2.6 0 1 0 0 4.4" stroke="#3b6cc0" stroke-width="1.5" fill="none"/><path d="M5.6 7.4h3.8M5.6 9.6h3.8M6.6 6.2v4.6M8.4 6.2v4.6" stroke="#4a78c4" stroke-width="0.9"/></svg>
<div class="t" style="left:640.6px;top:337.20px;font-size:12px;font-weight:bold;color:#0e0e0e;letter-spacing:0.712px;">Cubism Look Target (Script)</div>
<svg class="abs" style="left:976px;top:335.0px" width="14" height="14"><rect x="0.6" y="0.6" width="12" height="12.8" rx="1.8" fill="#2a4670"/><rect x="2" y="1.6" width="9.6" height="10.4" rx="1" fill="#4f76a8"/><rect x="2.2" y="1.6" width="9.2" height="1.4" fill="#8fb0d8"/><text x="6.6" y="10" font-size="8.5" font-family="Liberation Sans" fill="#b8cbe2" text-anchor="middle">?</text></svg>
<svg class="abs" style="left:996px;top:336.5px" width="10" height="12"><rect x="0" y="3.4" width="6.2" height="1.8" fill="#1a1a1a"/><rect x="7.8" y="0" width="1.6" height="5" fill="#1a1a1a"/><rect x="0" y="9" width="2" height="1.6" fill="#1a1a1a"/><rect x="4" y="6" width="2" height="5.5" fill="#1a1a1a"/><rect x="8" y="9" width="1.4" height="1.6" fill="#1a1a1a"/></svg>
<svg class="abs" style="left:1012px;top:337.0px" width="12" height="12"><circle cx="4.8" cy="4.8" r="2.9" fill="none" stroke="#151515" stroke-width="1.5"/><g stroke="#151515" stroke-width="1.5"><path d="M4.8 0.2v1.8M4.8 7.6v1.8M0.2 4.8h1.8M7.6 4.8h1.8M1.5 1.5l1.3 1.3M6.8 6.8l1.3 1.3M1.5 8.1l1.3-1.3M6.8 2.8l1.3-1.3"/></g><path d="M8.6 8.3h3.4l-1.7 2.2z" fill="#222"/></svg>
<div class="t" style="left:606.5px;top:350.70px;font-size:12px;font-weight:normal;color:#565656;letter-spacing:0.375px;">Script</div>
<div style="position:absolute;left:764px;top:349px;width:241px;height:14px;background:#a3a3a3;border:1px solid #8c8c8c"></div>
<svg class="abs" style="left:767px;top:351px" width="9" height="10"><path d="M0.5 0.5h6l2 2v7h-8z" fill="#cfcfcf"/><text x="4.5" y="7" font-size="4" font-family="Liberation Sans" font-weight="bold" fill="#6f8fc0" text-anchor="middle">c#</text></svg>
<div class="abs" style="left:779px;top:349px;width:225px;height:14px;overflow:hidden">
<div class="t" style="left:0px;top:1.50px;font-size:12px;font-weight:normal;color:#6a6a6a;letter-spacing:0.326px;">CubismLookTarget</div>
</div>
<svg class="abs" style="left:1012px;top:351.5px" width="9" height="9"><circle cx="4.5" cy="4.5" r="3.5" fill="none" stroke="#3a3a3a" stroke-width="0.9"/><circle cx="4.5" cy="4.5" r="0.9" fill="#3a3a3a"/></svg>
<div style="position:absolute;left:591px;top:371px;width:433px;height:1px;background:#6c6c6c"></div>
<div style="position:absolute;left:591px;top:372px;width:433px;height:1px;background:#acacac"></div>
<svg class="abs" style="left:596px;top:377.5px" width="9" height="8"><path d="M0 0.5h8.5L4.25 8z" fill="#6a6a6a"/></svg>
<svg class="abs" style="left:609px;top:373.5px" width="11" height="14"><path d="M0.5 0.5h6.5l3.2 3.2v10h-9.7z" fill="#bdbdbd"/><path d="M7 0.5v3.2h3.2z" fill="#d0d0d0"/><path d="M4.6 6.3a2.6 2.6 0 1 0 0 4.4" stroke="#3b6cc0" stroke-width="1.5" fill="none"/><path d="M5.6 7.4h3.8M5.6 9.6h3.8M6.6 6.2v4.6M8.4 6.2v4.6" stroke="#4a78c4" stroke-width="0.9"/></svg>
<div style="position:absolute;left:626px;top:375.5px;width:11px;height:11px;background:linear-gradient(#8aa6cc,#6a88b4);border:1px solid #4c5a70;border-radius:2px"></div>
<svg class="abs" style="left:626px;top:373.5px" width="13" height="13"><path d="M2.3 7.3L5 10.5L11.3 2" stroke="#0a0a0a" stroke-width="2" fill="none"/></svg>
<div class="t" style="left:640.6px;top:375.70px;font-size:12px;font-weight:bold;color:#0e0e0e;letter-spacing:0.598px;">Cubism Look Controller (Script)</div>
<svg class="abs" style="left:976px;top:373.5px" width="14" height="14"><rect x="0.6" y="0.6" width="12" height="12.8" rx="1.8" fill="#2a4670"/><rect x="2" y="1.6" width="9.6" height="10.4" rx="1" fill="#4f76a8"/><rect x="2.2" y="1.6" width="9.2" height="1.4" fill="#8fb0d8"/><text x="6.6" y="10" font-size="8.5" font-family="Liberation Sans" fill="#b8cbe2" text-anchor="middle">?</text></svg>
<svg class="abs" style="left:996px;top:375.0px" width="10" height="12"><rect x="0" y="3.4" width="6.2" height="1.8" fill="#1a1a1a"/><rect x="7.8" y="0" width="1.6" height="5" fill="#1a1a1a"/><rect x="0" y="9" width="2" height="1.6" fill="#1a1a1a"/><rect x="4" y="6" width="2" height="5.5" fill="#1a1a1a"/><rect x="8" y="9" width="1.4" height="1.6" fill="#1a1a1a"/></svg>
<svg class="abs" style="left:1012px;top:375.5px" width="12" height="12"><circle cx="4.8" cy="4.8" r="2.9" fill="none" stroke="#151515" stroke-width="1.5"/><g stroke="#151515" stroke-width="1.5"><path d="M4.8 0.2v1.8M4.8 7.6v1.8M0.2 4.8h1.8M7.6 4.8h1.8M1.5 1.5l1.3 1.3M6.8 6.8l1.3 1.3M1.5 8.1l1.3-1.3M6.8 2.8l1.3-1.3"/></g><path d="M8.6 8.3h3.4l-1.7 2.2z" fill="#222"/></svg>
<div class="t" style="left:606.5px;top:391.20px;font-size:12px;font-weight:normal;color:#565656;letter-spacing:0.375px;">Script</div>
<div style="position:absolute;left:764px;top:389.5px;width:241px;height:14px;background:#a3a3a3;border:1px solid #8c8c8c"></div>
<svg class="abs" style="left:767px;top:391.5px" width="9" height="10"><path d="M0.5 0.5h6l2 2v7h-8z" fill="#cfcfcf"/><text x="4.5" y="7" font-size="4" font-family="Liberation Sans" font-weight="bold" fill="#6f8fc0" text-anchor="middle">c#</text></svg>
<div class="abs" style="left:779px;top:389.5px;width:225px;height:14px;overflow:hidden">
<div class="t" style="left:0px;top:1.50px;font-size:12px;font-weight:normal;color:#6a6a6a;letter-spacing:0.644px;">CubismLookController</div>
</div>
<svg class="abs" style="left:1012px;top:392.0px" width="9" height="9"><circle cx="4.5" cy="4.5" r="3.5" fill="none" stroke="#3a3a3a" stroke-width="0.9"/><circle cx="4.5" cy="4.5" r="0.9" fill="#3a3a3a"/></svg>
<div class="t" style="left:606.25px;top:408.70px;font-size:12px;font-weight:normal;color:#141414;letter-spacing:0.024px;">Blend Mode</div>
<div style="position:absolute;left:763px;top:407.5px;width:260px;height:14px;background:linear-gradient(#c4c4c4,#aaaaaa);border:1px solid #5a5a5a;border-radius:3px"></div>
<div class="t" style="left:769.3px;top:409.72px;font-size:10px;font-weight:bold;color:#141414;letter-spacing:0.192px;">Additive</div>
<svg class="abs" style="left:1015px;top:411px" width="4" height="7"><path d="M0 2.8L2 0L4 2.8zM0 4.2L2 7L4 4.2z" fill="#222"/></svg>
<div class="t" style="left:606.25px;top:426.70px;font-size:12px;font-weight:normal;color:#141414;letter-spacing:0.486px;">Center</div>
<div style="position:absolute;left:763px;top:425px;width:242px;height:14.5px;background:#a7a7a7;border:1px solid #727272;border-top-color:#5e5e5e"></div>
<svg class="abs" style="left:766px;top:427px" width="12" height="11"><path d="M6 6.5V1" stroke="#6ab42a" stroke-width="1.5"/><path d="M6 6.5L1 9.5" stroke="#3a8ad8" stroke-width="1.5"/><path d="M6 6.5L11 9.5" stroke="#d02a2a" stroke-width="1.5"/></svg>
<div class="t" style="left:779px;top:426.10px;font-size:12px;font-weight:normal;color:#141414;letter-spacing:0.465px;">neko (Transform)</div>
<svg class="abs" style="left:1012px;top:427.5px" width="9" height="9"><circle cx="4.5" cy="4.5" r="3.5" fill="none" stroke="#3a3a3a" stroke-width="0.9"/><circle cx="4.5" cy="4.5" r="0.9" fill="#3a3a3a"/></svg>
<div class="t" style="left:606.25px;top:444.40px;font-size:12px;font-weight:normal;color:#141414;letter-spacing:0.355px;">Damping</div>
<div style="position:absolute;left:763px;top:442.2px;width:260px;height:15.3px;background:#a7a7a7;border:1px solid #727272;border-top-color:#5e5e5e"></div>
<div class="t" style="left:766.7px;top:444.10px;font-size:12px;font-weight:normal;color:#141414;letter-spacing:0.2px;">0.15</div>
<div class="t" style="left:606.25px;top:462.10px;font-size:12px;font-weight:normal;color:#141414;letter-spacing:0.72px;">Target</div>
<div style="position:absolute;left:763px;top:460px;width:242px;height:15px;background:#a7a7a7;border:1px solid #727272;border-top-color:#5e5e5e"></div>
<svg class="abs" style="left:766px;top:461.5px" width="12" height="12"><path d="M1 3L6 1L11 3V9L6 11.5L1 9z" fill="#c6c6c6" stroke="#8a8a8a" stroke-width="0.6"/></svg>
<div class="t" style="left:779px;top:462.10px;font-size:12px;font-weight:normal;color:#141414;letter-spacing:0.443px;">neko</div>
<svg class="abs" style="left:1012px;top:462.5px" width="9" height="9"><circle cx="4.5" cy="4.5" r="3.5" fill="none" stroke="#3a3a3a" stroke-width="0.9"/><circle cx="4.5" cy="4.5" r="0.9" fill="#3a3a3a"/></svg>
<div style="position:absolute;left:591px;top:482px;width:433px;height:1px;background:#6c6c6c"></div>
<div style="position:absolute;left:591px;top:483px;width:433px;height:1px;background:#acacac"></div>
<svg class="abs" style="left:596px;top:488.5px" width="9" height="8"><path d="M0 0.5h8.5L4.25 8z" fill="#6a6a6a"/></svg>
<svg class="abs" style="left:609px;top:484.5px" width="11" height="14"><path d="M0.5 0.5h6.5l3.2 3.2v10h-9.7z" fill="#bdbdbd"/><path d="M7 0.5v3.2h3.2z" fill="#d0d0d0"/><path d="M4.6 6.3a2.6 2.6 0 1 0 0 4.4" stroke="#3b6cc0" stroke-width="1.5" fill="none"/><path d="M5.6 7.4h3.8M5.6 9.6h3.8M6.6 6.2v4.6M8.4 6.2v4.6" stroke="#4a78c4" stroke-width="0.9"/></svg>
<div style="position:absolute;left:626px;top:486.5px;width:11px;height:11px;background:linear-gradient(#8aa6cc,#6a88b4);border:1px solid #4c5a70;border-radius:2px"></div>
<svg class="abs" style="left:626px;top:484.5px" width="13" height="13"><path d="M2.3 7.3L5 10.5L11.3 2" stroke="#0a0a0a" stroke-width="2" fill="none"/></svg>
<div class="t" style="left:640.6px;top:486.70px;font-size:12px;font-weight:bold;color:#0e0e0e;letter-spacing:0.637px;">Cubism Fade Controller (Script)</div>
<svg class="abs" style="left:976px;top:484.5px" width="14" height="14"><rect x="0.6" y="0.6" width="12" height="12.8" rx="1.8" fill="#2a4670"/><rect x="2" y="1.6" width="9.6" height="10.4" rx="1" fill="#4f76a8"/><rect x="2.2" y="1.6" width="9.2" height="1.4" fill="#8fb0d8"/><text x="6.6" y="10" font-size="8.5" font-family="Liberation Sans" fill="#b8cbe2" text-anchor="middle">?</text></svg>
<svg class="abs" style="left:996px;top:486.0px" width="10" height="12"><rect x="0" y="3.4" width="6.2" height="1.8" fill="#1a1a1a"/><rect x="7.8" y="0" width="1.6" height="5" fill="#1a1a1a"/><rect x="0" y="9" width="2" height="1.6" fill="#1a1a1a"/><rect x="4" y="6" width="2" height="5.5" fill="#1a1a1a"/><rect x="8" y="9" width="1.4" height="1.6" fill="#1a1a1a"/></svg>
<svg class="abs" style="left:1012px;top:486.5px" width="12" height="12"><circle cx="4.8" cy="4.8" r="2.9" fill="none" stroke="#151515" stroke-width="1.5"/><g stroke="#151515" stroke-width="1.5"><path d="M4.8 0.2v1.8M4.8 7.6v1.8M0.2 4.8h1.8M7.6 4.8h1.8M1.5 1.5l1.3 1.3M6.8 6.8l1.3 1.3M1.5 8.1l1.3-1.3M6.8 2.8l1.3-1.3"/></g><path d="M8.6 8.3h3.4l-1.7 2.2z" fill="#222"/></svg>
<div class="t" style="left:606.5px;top:501.70px;font-size:12px;font-weight:normal;color:#565656;letter-spacing:0.375px;">Script</div>
<div style="position:absolute;left:764px;top:500px;width:241px;height:14px;background:#a3a3a3;border:1px solid #8c8c8c"></div>
<svg class="abs" style="left:767px;top:502px" width="9" height="10"><path d="M0.5 0.5h6l2 2v7h-8z" fill="#cfcfcf"/><text x="4.5" y="7" font-size="4" font-family="Liberation Sans" font-weight="bold" fill="#6f8fc0" text-anchor="middle">c#</text></svg>
<div class="abs" style="left:779px;top:500px;width:225px;height:14px;overflow:hidden">
<div class="t" style="left:0px;top:1.50px;font-size:12px;font-weight:normal;color:#6a6a6a;letter-spacing:0.469px;">CubismFadeController</div>
</div>
<svg class="abs" style="left:1012px;top:502.5px" width="9" height="9"><circle cx="4.5" cy="4.5" r="3.5" fill="none" stroke="#3a3a3a" stroke-width="0.9"/><circle cx="4.5" cy="4.5" r="0.9" fill="#3a3a3a"/></svg>
<div class="t" style="left:606.6px;top:517.80px;font-size:12px;font-weight:normal;color:#141414;letter-spacing:0.119px;">Cubism Fade Motion List</div>
<div style="position:absolute;left:763px;top:517px;width:242px;height:14.5px;background:#a7a7a7;border:1px solid #727272;border-top-color:#5e5e5e"></div>
<svg class="abs" style="left:766px;top:518.5px" width="11" height="11"><rect x="0.5" y="0.5" width="10" height="10" fill="#5a6470" stroke="#333" stroke-width="0.6"/><circle cx="5.5" cy="5.5" r="3" fill="#8898a8"/></svg>
<div class="abs" style="left:779px;top:517px;width:225px;height:14px;overflow:hidden">
<div class="t" style="left:0px;top:0.80px;font-size:12px;font-weight:normal;color:#141414;letter-spacing:0.2px;">neko.fadeMotionList (CubismFadeMotionList)</div>
</div>
<svg class="abs" style="left:1012px;top:519.5px" width="9" height="9"><circle cx="4.5" cy="4.5" r="3.5" fill="none" stroke="#3a3a3a" stroke-width="0.9"/><circle cx="4.5" cy="4.5" r="0.9" fill="#3a3a3a"/></svg>
<div style="position:absolute;left:591px;top:539.5px;width:433px;height:1px;background:#6c6c6c"></div>
<div style="position:absolute;left:591px;top:540.5px;width:433px;height:1px;background:#acacac"></div>
<div style="position:absolute;left:697px;top:548px;width:224px;height:22px;background:linear-gradient(#c2c2c2,#a6a6a6);border:1px solid #595959;border-radius:3px"></div>
<div class="t" style="left:758px;top:551.37px;font-size:13.5px;font-weight:normal;color:#262626;letter-spacing:0.2px;">Add Component</div>
<svg class="abs" style="left:0;top:0" width="1024" height="791" viewBox="0 0 1024 791">
<defs><clipPath id="gv"><rect x="49" y="217" width="538" height="405"/></clipPath><linearGradient id="hairg" gradientUnits="userSpaceOnUse" x1="0" y1="300" x2="0" y2="385"><stop offset="0" stop-color="#1b1b1b"/><stop offset="0.45" stop-color="#1c201e"/><stop offset="0.8" stop-color="#28453a"/><stop offset="1" stop-color="#3a6650"/></linearGradient><linearGradient id="lockg" gradientUnits="userSpaceOnUse" x1="0" y1="315" x2="0" y2="360"><stop offset="0" stop-color="#1b1b1b"/><stop offset="0.5" stop-color="#1e2822"/><stop offset="1" stop-color="#325c46"/></linearGradient><linearGradient id="shirtg" gradientUnits="userSpaceOnUse" x1="0" y1="470" x2="0" y2="622"><stop offset="0" stop-color="#ffffff"/><stop offset="0.8" stop-color="#ffffff"/><stop offset="0.88" stop-color="#f2f2f2"/><stop offset="1" stop-color="#f0f0f0"/></linearGradient><linearGradient id="edgeg" gradientUnits="userSpaceOnUse" x1="0" y1="312" x2="0" y2="375"><stop offset="0" stop-color="#2f5a46" stop-opacity="0"/><stop offset="1" stop-color="#3a6a52" stop-opacity="0.8"/></linearGradient><filter id="sh" x="-20%" y="-20%" width="140%" height="140%"><feGaussianBlur stdDeviation="1.8"/></filter><clipPath id="hairclip"><path d="M232 357 C232 340 232 330 232.5 318 C234 290 244 268 259 253 L265.5 250.6 C275 243 290 234.5 305 234 C342 234 376 258 391 296 C395 310 396 325 395.5 338 L390.6 332.8 C391 340 390 345 389 349 C384 351 378 352 374 353 C368 354 364 357 361 362 C357 368 355 376 354 384 L371 381.5 C362 377 352 373 340 367 C325 360 310 352 297.5 338.5 C286 326 274 312 268 294 C262 293 253 293 250 296 C247 305 246.5 330 246 358 C242 355 236 353 232 357 Z"/></clipPath></defs>
<g clip-path="url(#gv)">
<path d="M344 386 L361 388 C361 400 356 412 345.5 419 C344 410 344 398 344 386 Z" fill="#1a221e"/>
<path d="M191 598 L223 606 L223 623 L192 623 C191 612 190 605 191 598 Z" fill="#fdeee1" stroke="#6a4a40" stroke-width="0.6"/>
<path d="M420 606 L461 596 C462 606 461 614 461 623 L420 623 Z" fill="#fdeee1" stroke="#6a4a40" stroke-width="0.6"/>
<path d="M192 600 L222 608 L222 612 C210 610 200 606 192 603Z" fill="#f4c3ad" opacity="0.7"/>
<path d="M421 608 L460 598 L460 601 C448 606 435 609 421 611Z" fill="#f4c3ad" opacity="0.7"/>
<path d="M286.8 425 L286.8 449 C275 458 255 467 229 475 C250 497 285 515 316 515 C350 514 382 497 403 474 C380 466 356 458 344.3 451 L344.3 410 Z" fill="#fdeee1"/>
<path d="M286.8 431 L286.8 457 M344.3 420 L344.3 458" stroke="#b89080" stroke-width="0.6" fill="none"/>
<path d="M286.8 449 C275 458 255 467 232 474.5 M344.3 451 C356 458 380 466 402 473.5" stroke="#7a5a50" stroke-width="0.6" fill="none"/>
<path d="M259 477 C270 478 280 479 289 481 C292 483 295 484 297 484 C302 483 306 481 310 480 C318 479 326 478 336 476" stroke="#d4a594" stroke-width="0.8" fill="none"/>
<path d="M229.4 475 L205 484 C197 490 193 498 190 512 L181 545 C177 560 173 570 171 577 L175 584 L222.5 608.5 L222.5 623 L420.6 623 L420.6 608.5 L487.5 581 C485 572 478 558 470 540 L452 501 C447 491 441 485 434.6 482 L403 474 C382 497 350 513 316 514 C284 514 252 497 229.4 475 Z" fill="url(#shirtg)" stroke="#4a4a4a" stroke-width="0.9"/>
<path d="M231.5 479.5 C255 504 285 520 316 520 C350 520 380 504 400.5 478" stroke="#5a5a5a" stroke-width="0.9" fill="none"/>
<path d="M213 494 C220 520 223 560 222 604" stroke="#9a9a9a" stroke-width="0.8" fill="none"/>
<path d="M431 494 C421 520 417 560 420 604" stroke="#9a9a9a" stroke-width="0.8" fill="none"/>
<path d="M172.5 576 C190 588 205 597 222.5 604" stroke="#777" stroke-width="0.7" fill="none"/>
<path d="M486.5 577 C470 588 445 598 420.6 604" stroke="#777" stroke-width="0.7" fill="none"/>
<text x="247" y="585.5" font-family="Liberation Sans" font-weight="bold" font-size="30" textLength="29" lengthAdjust="spacingAndGlyphs" fill="#111" transform="skewX(0)">CG</text>
<text x="281" y="585.5" font-family="Liberation Sans" font-weight="bold" font-size="30" textLength="108" lengthAdjust="spacingAndGlyphs" fill="#111">METHOD</text>
<path d="M246 280 L246.2 371 C247 377 249 381 252 384 C256 393 259 400 262.8 405.3 C267 411 271 416 275.4 420.5 C279 424 283 428 286.8 430.6 C290 433 293 435 295.6 435.6 C299 435 302 434 304.5 433 C313 428 321 423 328.5 418 C335 413 340 407 345 401.5 C348 398 350 395 351.3 391.4 L353 280 Z" fill="#fdeee1"/>
<path d="M304.5 433 C313 428 321 423 328.5 418 C335 413 340 407 345 401.5 L344.3 416.7 C338 424 333 428 328.5 430.6 C322 434 316 436 310.8 437 C308 436 306 434.5 304.5 433 Z" fill="#f4c3ad"/>
<path d="M246.2 371 C247 377 249 381 252 384 C256 393 259 400 262.8 405.3 C267 411 271 416 275.4 420.5 C279 424 283 428 286.8 430.6 C290 433 293 435 295.6 435.6 C299 435 302 434 304.5 433 C313 428 321 423 328.5 418 C335 413 340 407 345 401.5 C348 398 350 395 351.3 391.4" stroke="#8a6050" stroke-width="0.7" fill="none"/>
<path d="M351 360 C355 352 364 350 370 351.5 C376 354 376.5 362 374.5 368 C372 376 366 386 358 390.5 C354 392 352 391 351 388 Z" fill="#fdeee1" stroke="#8a6a5a" stroke-width="0.5"/>
<path d="M366 358 C371 357 373 362 371 369 C369 376 366 380 361 383" stroke="#eab49c" stroke-width="2.2" fill="none"/>
<path d="M232 357 C232 340 232 330 232.5 318 C234 290 244 268 259 253 L265.5 250.6 C275 243 290 234.5 305 234 C342 234 376 258 391 296 C395 310 396 325 395.5 338 L390.6 332.8 C391 340 390 345 389 349 C384 351 378 352 374 353 C368 354 364 357 361 362 C357 368 355 376 354 384 L371 381.5 C362 377 352 373 340 367 C325 360 310 352 297.5 338.5 C286 326 274 312 268 294 C262 293 253 293 250 296 C247 305 246.5 330 246 358 C242 355 236 353 232 357 Z" fill="url(#hairg)" stroke="#111" stroke-width="0.6"/>
<path d="M286 281 C320 283 350 280 380 274 L383 283 C350 290 318 292 290 287 Z" fill="#303030"/>
<path d="M243 276 L252 278 L251 281 L242 280 Z" fill="#3a3a3a"/>
<path d="M232.3 322 C232 340 232 348 232 357 C236 353 242 355 246 358 L246.5 322 Z" fill="url(#lockg)"/>
<path d="M371 381.5 C362 377 352 373 340 367 C325 360 310 352 297.5 338.5 C286 326 274 312 268 294" stroke="url(#edgeg)" stroke-width="8" fill="none" clip-path="url(#hairclip)"/>
<path d="M372 381 C352 371 330 360 312 348 C296 336 282 318 271 296" stroke="#050505" stroke-width="0.8" fill="none"/>
<path d="M243.5 350.5 C248 345 255 343 262 343.3 C267 343.8 270.5 345.8 272.8 349.2 L271 349.8 C266 347.5 260 346.8 254 347.3 C250 347.8 247 349.5 244.5 351.8 Z" fill="#1e1a1a"/>
<path d="M296 348 C298 345 301 343.8 303.5 343.6 L303.8 346 C301 346.5 299 347.5 296.5 349.2 Z" fill="#1e1a1a"/>
<path d="M250 364 C253 360 258 358 264 358 C270 358 274 361 277.5 365.5 C275 369 270 372 262 372.2 C256 372 252 369 250 364 Z" fill="#fff"/>
<circle cx="262.5" cy="364.8" r="6.5" fill="#343a36"/><circle cx="262.5" cy="364.8" r="3" fill="#141614"/><circle cx="260" cy="362.6" r="1.3" fill="#fff"/><circle cx="265.6" cy="368" r="0.8" fill="#ddd"/>
<path d="M249.3 364.5 C253 359.5 258 357.5 264 357.5 C270 357.5 274 360.5 277.8 365.5" stroke="#151515" stroke-width="2.2" fill="none"/>
<path d="M251 359 C256 355 266 354 272 356" stroke="#9a8a88" stroke-width="0.7" fill="none"/>
<path d="M257 372.5 C262 373.5 268 372.5 271 371" stroke="#777" stroke-width="0.7" fill="none"/>
<path d="M300.5 363.5 C303 358 308 355.5 315 355.5 C322 355.5 327 359 331 365 C327 369.5 321 371.5 314 371.5 C307 371 303 368 300.5 363.5 Z" fill="#fff"/>
<circle cx="314.2" cy="363" r="7.6" fill="#343a36"/><circle cx="314.2" cy="363" r="3.4" fill="#141614"/><circle cx="311.8" cy="360.8" r="1.4" fill="#fff"/><circle cx="318" cy="366.8" r="0.9" fill="#ddd"/>
<path d="M300.5 363.8 C303 358.5 308 355.5 315 355.5 C320 355.5 324 357 327 359.5" stroke="#151515" stroke-width="2.2" fill="none"/>
<path d="M309 372 C316 373 322 372 327 370" stroke="#666" stroke-width="0.7" fill="none"/>
<path d="M280.5 393 C283 395.5 285.5 396.5 288.7 393 C286 394 283 394 280.5 393Z" fill="#eaa48e" stroke="#eaa48e" stroke-width="1"/>
<path d="M282.4 409.3 C291 410.3 300 410.5 308.9 409.6" stroke="#3e3230" stroke-width="1.1" fill="none"/>
<path d="M291.8 415.6 C294 417 297 417 298.8 415.6" stroke="#f2b8a0" stroke-width="1.5" fill="none"/>
</g>
<g filter="url(#sh)" opacity="0.5" transform="translate(3,3)"><path d="M228 400.4 L178 420.5 L176.6 415 L158.9 437 L187 435.8 L183.4 431.5 L228.5 401.6 Z" fill="#101a30"/><circle cx="137" cy="449.2" r="10" fill="none" stroke="#101a30" stroke-width="4.3"/></g>
<path d="M228 400.4 L178 420.5 L176.6 415 L158.9 437 L187 435.8 L183.4 431.5 L228.5 401.6 Z" fill="#f42262"/>
<circle cx="137" cy="449.2" r="10" fill="none" stroke="#f42262" stroke-width="4.3"/>
<circle cx="36.2" cy="25.4" r="22" fill="none" stroke="#202020" stroke-width="4.6" opacity="0.35" filter="url(#sh)"/>
<circle cx="34.7" cy="23.6" r="22" fill="none" stroke="#f42262" stroke-width="4.6"/>
</svg></body></html>
